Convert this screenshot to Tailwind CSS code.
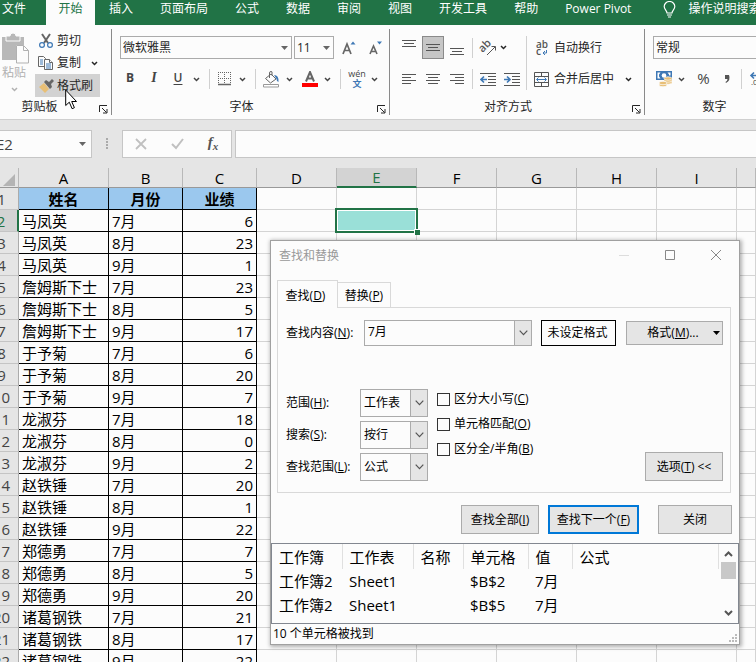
<!DOCTYPE html>
<html lang="zh-CN">
<head>
  <meta charset="UTF-8">
  <meta name="viewport" content="width=device-width, initial-scale=1.0">
  <title>工作簿2 - Excel</title>
  <script src="https://cdn.jsdelivr.net/npm/@tailwindcss/browser@4"></script>
</head>
<body class="relative flex h-screen flex-col overflow-hidden bg-[#fcfcfc] font-['Open_Sans','Noto_Sans_CJK_SC',sans-serif] text-[12px] leading-4 text-[#262626]">

  <!-- Shared icons -->
  <svg class="hidden">
    <symbol id="chev" viewBox="0 0 7 5"><path d="M1 1l2.500 2.500L6 1" fill="none" stroke="currentColor" stroke-width="1.500"/></symbol>
    <symbol id="tri" viewBox="0 0 7 4"><path d="M0 0h7L3.500 4z" fill="currentColor"/></symbol>
    <symbol id="drop" viewBox="0 0 9 6"><path d="M.7 .7l3.800 4 3.800-4" fill="none" stroke="currentColor" stroke-width="1.200"/></symbol>
    <symbol id="launch" viewBox="0 0 9 9"><path d="M.5 7V.5H8M3 3l4.500 4.500M8 4v4H4" fill="none" stroke="currentColor"/></symbol>
  </svg>

  <!-- Ribbon tabs -->
  <nav class="flex h-[25px] shrink-0 gap-[27px] overflow-hidden whitespace-nowrap bg-[#217346] pl-0.5 text-white">
    <button class="pb-[7px]">文件</button>
    <button class="-mx-[7px] w-[49px] shrink-0 bg-[#fcfcfc] pb-[7px] text-[#217346]">开始</button>
    <button class="-ml-1.5 pb-[7px]">插入</button>
    <button class="pb-[7px]">页面布局</button>
    <button class="pb-[7px]">公式</button>
    <button class="pb-[7px]">数据</button>
    <button class="pb-[7px]">审阅</button>
    <button class="pb-[7px]">视图</button>
    <button class="pb-[7px]">开发工具</button>
    <button class="pb-[7px]">帮助</button>
    <button class="pb-[7px]">Power Pivot</button>
    <button class="ml-[5px] flex shrink-0 items-start gap-3 pt-px">
      <svg class="h-[17px] w-[13px]" viewBox="0 0 13 17" fill="none" stroke="currentColor" stroke-width="1.200"><path d="M4 12C4 9.500 1.200 8.500 1.200 5.500a5.300 5 0 0 1 10.600 0C11.800 8.500 9 9.500 9 12zM4 14h5M5 16h3"/></svg>
      <span>操作说明搜索</span>
    </button>
  </nav>

  <!-- Ribbon -->
  <section class="flex h-[95px] shrink-0 overflow-hidden whitespace-nowrap border-b border-[#cfcfcf] py-1">

    <!-- Clipboard -->
    <div class="flex w-28 shrink-0 flex-col border-r border-[#8a8a8a]">
      <div class="flex h-[72px] gap-1.5">
        <button class="flex h-[70px] w-[29px] flex-col items-center pt-1 pr-px text-[#b1b1b1]">
          <svg class="h-[31px] w-[29px]" viewBox="0 0 29 31"><path d="M2 4h22v8h-8v15H2z" fill="#b8b8b8"/><path d="M6 3h4a3 3 0 0 1 6 0h4v5H6z" fill="#b8b8b8" stroke="#fcfcfc"/><path d="M16.500 12.500h7l5 5v12.500h-12zM23.500 12.500v5h5" fill="#fcfcfc" stroke="#b1b1b1"/></svg>
          <span class="mt-px">粘贴</span>
          <svg class="mt-1.5 h-[5px] w-[7px]"><use href="#chev"/></svg>
        </button>
        <div class="flex flex-col">
          <button class="flex h-[23px] items-center gap-1 pl-1">
            <svg class="h-4 w-[14px]" viewBox="0 0 14 16" fill="none"><path d="M3 1l6 9M11 1L5 10" stroke="#666" stroke-width="2"/><circle cx="3" cy="12" r="2.400" stroke="#3e78b5" stroke-width="1.200"/><circle cx="11" cy="12" r="2.400" stroke="#3e78b5" stroke-width="1.200"/></svg>
            剪切
          </button>
          <button class="flex h-[22px] items-center gap-1 pl-[3px]">
            <svg class="h-[14px] w-[15px]" viewBox="0 0 15 14" fill="#fcfcfc" stroke="#666"><path d="M.5 .5h5l2 2v8h-7z"/><path d="M2 4h3M2 6h3M2 8h3" stroke="#3e78b5"/><path d="M6.500 3.500h5l3 3v7h-8z"/><path d="M11.500 3.500v3h3" /><path d="M8 8h5M8 10h5M8 12h5" stroke="#3e78b5"/></svg>
            复制
            <svg class="ml-1.5 h-[5px] w-[7px]"><use href="#chev"/></svg>
          </button>
          <button class="flex h-[23px] w-[65px] items-center gap-[3px] bg-[#d2d2d2] pl-1">
            <svg class="h-[14px] w-[15px]" viewBox="0 0 15 14"><path d="M0 8l5-4 5 6-4 4z" fill="#e8bf76"/><path d="M5 3l2-2 3 2 3-3 2 2-3 3 1 3-2 2z" fill="#666"/></svg>
            格式刷
          </button>
        </div>
      </div>
      <div class="flex items-center">
        <span class="flex-1 pr-5 text-center">剪贴板</span>
        <button aria-label="剪贴板设置" class="mt-1 mr-[3px]"><svg class="h-[9px] w-[9px]"><use href="#launch"/></svg></button>
      </div>
    </div>

    <!-- Font -->
    <div class="flex w-[278px] shrink-0 flex-col border-r border-[#8a8a8a]">
      <div class="flex h-[72px] flex-col gap-2 pt-[7px] pl-2">
        <div class="flex h-[23px] gap-0.5">
          <label class="relative flex items-center">
            <select aria-label="字体" class="h-[23px] w-[172px] appearance-none border border-[#ababab] bg-transparent pl-0.5"><option>微软雅黑</option></select>
            <svg class="pointer-events-none absolute right-1 h-1 w-[7px] text-[#666]"><use href="#tri"/></svg>
          </label>
          <label class="relative flex items-center">
            <select aria-label="字号" class="h-[23px] w-10 appearance-none border border-[#ababab] bg-transparent pl-0.5"><option>11</option></select>
            <svg class="pointer-events-none absolute right-1 h-1 w-[7px] text-[#666]"><use href="#tri"/></svg>
          </label>
          <button aria-label="增大字号" class="ml-1.5 w-[14px]"><svg class="h-[14px] w-[14px]" viewBox="0 0 14 14" fill="none"><path d="M1 13L5 3l4 10M2.500 9.500h5" stroke="#666" stroke-width="1.700"/><path d="M8.500 3.500h5L11 .5z" fill="#3e78b5"/></svg></button>
          <button aria-label="减小字号" class="ml-[11px] w-[14px]"><svg class="h-[14px] w-[14px]" viewBox="0 0 14 14" fill="none"><path d="M1 13L4.500 5 8 13M2.500 10.500h4" stroke="#666" stroke-width="1.600"/><path d="M8 .5h5l-2.500 3z" fill="#3e78b5"/></svg></button>
        </div>
        <div class="flex h-6 items-center text-[#444]">
          <button class="-ml-0.5 w-6 pb-0.5 font-bold">B</button>
          <button class="w-6 pb-0.5 font-['Liberation_Serif'] text-[14px] font-bold italic">I</button>
          <button class="w-6 pb-0.5 font-semibold underline underline-offset-2">U</button>
          <button aria-label="下划线选项" class="flex w-3 justify-center"><svg class="h-[5px] w-[7px]"><use href="#chev"/></svg></button>
          <span class="mr-2 ml-[7px] h-5 border-l border-[#d0d0d0]"></span>
          <button aria-label="边框"><svg class="h-[14px] w-[14px]" viewBox="0 0 14 14" fill="none" stroke="#666"><path d="M0 .5h13M0 6.500h13M.5 0v12M6.500 0v12M12.500 0v12" stroke-dasharray="1 1"/><path d="M0 12.500h13" stroke-width="1.500"/></svg></button>
          <button aria-label="边框选项" class="ml-1 flex w-3 justify-center"><svg class="h-[5px] w-[7px]"><use href="#chev"/></svg></button>
          <span class="mr-[7px] ml-[7px] h-5 border-l border-[#d0d0d0]"></span>
          <button aria-label="填充颜色"><svg class="h-[17px] w-[17px]" viewBox="0 0 17 17" fill="none" stroke="#666"><path d="M2.500 7.500L8 3l5 5-5.500 4zM6.500 7V2q0-1.500 1.500-1.500T9 2v2.500"/><path d="M11 4q5 0 4.500 7-2-.5-2-3z" fill="#3e78b5" stroke="none"/><path d="M.5 13.500h15v2.500H.5z" fill="#fff" stroke="#999"/></svg></button>
          <button aria-label="填充选项" class="ml-[3px] flex w-3 justify-center"><svg class="h-[5px] w-[7px]"><use href="#chev"/></svg></button>
          <button aria-label="字体颜色" class="ml-[7px]"><svg class="h-4 w-4" viewBox="0 0 16 16" fill="none"><path d="M4 10.500L8 1l4 9.500M5.500 7.500h5" stroke="#666" stroke-width="2"/><path d="M0 12h16v4H0z" fill="#f00"/></svg></button>
          <button aria-label="字体颜色选项" class="ml-[3px] flex w-3 justify-center"><svg class="h-[5px] w-[7px]"><use href="#chev"/></svg></button>
          <span class="mr-2 ml-[7px] h-5 border-l border-[#d0d0d0]"></span>
          <button aria-label="显示拼音" class="w-4"><svg class="h-[17px] w-4 overflow-visible" viewBox="0 0 16 17"><text x="8" y="6" text-anchor="middle" font-size="9" fill="#444">wén</text><text x="8" y="16" text-anchor="middle" font-size="9" font-weight="bold" fill="#3e78b5">文</text></svg></button>
          <button aria-label="拼音选项" class="ml-[3px] flex w-3 justify-center"><svg class="h-[5px] w-[7px]"><use href="#chev"/></svg></button>
        </div>
      </div>
      <div class="flex items-center">
        <span class="flex-1 pr-1.5 text-center">字体</span>
        <button aria-label="字体设置" class="mt-1 mr-[3px]"><svg class="h-[9px] w-[9px]"><use href="#launch"/></svg></button>
      </div>
    </div>

    <!-- Alignment -->
    <div class="flex w-[255px] shrink-0 flex-col border-r border-[#8a8a8a]">
      <div class="flex h-[72px] pt-[7px] pl-[7px]">
        <div class="flex flex-col gap-2">
          <div class="flex h-[23px] items-center">
            <button aria-label="顶端对齐" class="flex w-6 justify-center"><svg class="mb-2 h-2 w-[14px]" viewBox="0 0 14 8" stroke="#555"><path d="M0 .5h14M2 3.500h10M0 6.500h14"/></svg></button>
            <button aria-label="垂直居中" class="mx-px flex h-[23px] w-[22px] items-center justify-center border border-[#8a8a8a] bg-[#c6c6c6]"><svg class="h-[7px] w-[14px]" viewBox="0 0 14 7" stroke="#555"><path d="M0 .5h14M2 3.500h10M0 6.500h14"/></svg></button>
            <button aria-label="底端对齐" class="flex w-6 justify-center"><svg class="mt-2 h-2 w-[14px]" viewBox="0 0 14 8" stroke="#555"><path d="M0 .5h14M2 3.500h10M0 6.500h14"/></svg></button>
            <span class="mx-[3px] h-5 border-l border-[#d0d0d0]"></span>
            <button aria-label="方向" class="ml-1"><svg class="h-4 w-4 overflow-visible" viewBox="0 0 16 16" fill="none" stroke="#555"><path d="M7 15l8-8M11.500 6.500h4v4"/><text x="0" y="9" transform="rotate(-45 6 8)" font-size="11" font-weight="600" fill="#555" stroke="none">ab</text></svg></button>
            <button aria-label="方向选项" class="ml-px flex w-3 justify-center"><svg class="h-[5px] w-[7px]"><use href="#chev"/></svg></button>
          </div>
          <div class="flex h-6 items-center">
            <button aria-label="左对齐" class="flex w-6 justify-center"><svg class="h-[11px] w-[14px]" viewBox="0 0 14 11" stroke="#555"><path d="M0 .5h14M0 3.500h9M0 6.500h14M0 9.500h9"/></svg></button>
            <button aria-label="居中" class="flex w-6 justify-center"><svg class="h-[11px] w-[14px]" viewBox="0 0 14 11" stroke="#555"><path d="M0 .5h14M2 3.500h10M0 6.500h14M2 9.500h10"/></svg></button>
            <button aria-label="右对齐" class="flex w-6 justify-center"><svg class="h-[11px] w-[14px]" viewBox="0 0 14 11" stroke="#555"><path d="M0 .5h14M5 3.500h9M0 6.500h14M5 9.500h9"/></svg></button>
            <span class="mx-[3px] h-5 border-l border-[#d0d0d0]"></span>
            <button aria-label="减少缩进量" class="ml-1"><svg class="h-[13px] w-4" viewBox="0 0 16 13" fill="none" stroke="#555"><path d="M0 .5h16M8 3.500h8M8 6.500h8M8 9.500h8M0 12.500h16"/><path d="M7 6.500H1M4 3.500l-3 3 3 3" stroke="#3e78b5" stroke-width="1.600"/></svg></button>
            <button aria-label="增加缩进量" class="ml-2"><svg class="h-[13px] w-4" viewBox="0 0 16 13" fill="none" stroke="#555"><path d="M0 .5h16M8 3.500h8M8 6.500h8M8 9.500h8M0 12.500h16"/><path d="M0 6.500h6M3 3.500l3 3-3 3" stroke="#3e78b5" stroke-width="1.600"/></svg></button>
          </div>
        </div>
        <span class="ml-1.5 h-[54px] border-l border-[#d0d0d0]"></span>
        <div class="ml-[7px] flex flex-col gap-2">
          <button class="flex h-[23px] items-center gap-[5px]">
            <svg class="h-4 w-[15px] overflow-visible" viewBox="0 0 15 16" fill="none"><text x="2" y="8" font-size="10" font-weight="600" fill="#555">ab</text><text x="2" y="15" font-size="10" font-weight="600" fill="#555">c</text><path d="M12.500 10v3H9M11 11l-2 2 2 2" stroke="#3e78b5"/></svg>
            自动换行
          </button>
          <button class="flex h-6 items-center gap-[5px]">
            <svg class="h-[15px] w-[15px]" viewBox="0 0 15 15" fill="none" stroke="#555"><path d="M.5 .5h14v14H.5zM.5 4.500h14M.5 10.500h14M7.500 .5v4M7.500 10.500v4"/><path d="M3 7.500h9M4.500 5.500l-2 2 2 2M10.500 5.500l2 2-2 2" stroke="#3e78b5"/></svg>
            合并后居中
            <svg class="ml-1.5 h-[5px] w-[7px]"><use href="#chev"/></svg>
          </button>
        </div>
      </div>
      <div class="flex items-center">
        <span class="flex-1 pr-1.5 text-center">对齐方式</span>
        <button aria-label="对齐设置" class="mt-1 mr-[3px]"><svg class="h-[9px] w-[9px]"><use href="#launch"/></svg></button>
      </div>
    </div>

    <!-- Number -->
    <div class="flex min-w-0 flex-1 flex-col">
      <div class="flex h-[72px] flex-col gap-2 pt-[7px] pl-2">
        <select aria-label="数字格式" class="h-[23px] w-[130px] shrink-0 appearance-none border border-[#ababab] bg-transparent pl-0.5"><option>常规</option></select>
        <div class="flex h-6 items-center text-[#444]">
          <button aria-label="会计数字格式" class="ml-[3px] shrink-0"><svg class="h-4 w-4" viewBox="0 0 16 16"><path d="M0 0h16v9H0z" fill="#3e78b5"/><path d="M1.500 1.500h3l-1.500 2v2l1.500 2h-3zM14.500 1.500h-3l1.500 2v1h1.500z" fill="#fff"/><circle cx="8" cy="4.500" r="2.300" fill="#fff"/><g fill="#e8bf76" stroke="#fcfcfc" stroke-width=".7"><ellipse cx="12" cy="11.500" rx="4" ry="1.700"/><ellipse cx="12" cy="9.500" rx="4" ry="1.700"/><ellipse cx="12" cy="7.500" rx="4" ry="1.700"/><ellipse cx="7" cy="14" rx="4" ry="1.700"/><ellipse cx="7" cy="12" rx="4" ry="1.700"/></g></svg></button>
          <button aria-label="会计格式选项" class="ml-[3px] flex w-3 shrink-0 justify-center"><svg class="h-[5px] w-[7px]"><use href="#chev"/></svg></button>
          <button class="ml-2.5 w-[13px] shrink-0 pb-0.5 text-[15px]">%</button>
          <button aria-label="千位分隔样式" class="ml-3.5 shrink-0"><svg class="h-2 w-[7px]" viewBox="0 0 7 8"><path d="M1 0h4q2 5-3 8l-.5-1Q3.500 6 3.500 4H1z" fill="#555"/></svg></button>
          <span class="mr-2 ml-2.5 h-5 border-l border-[#d0d0d0]"></span>
          <button aria-label="增加小数位数" class="shrink-0"><svg class="h-[14px] w-[14px] overflow-visible" viewBox="0 0 14 14" fill="none"><path d="M7 3.500H1M4 .5l-3 3 3 3" stroke="#3e78b5" stroke-width="1.600"/><text x="1" y="13" font-size="8" fill="#444">.00</text></svg></button>
        </div>
      </div>
      <span class="pl-7 text-center">数字</span>
    </div>
  </section>

  <!-- Formula bar -->
  <section class="-ml-[15px] flex h-12 shrink-0 items-center bg-[#e5e5e5]">
    <label class="relative flex items-center">
      <input aria-label="名称框" value="E2" class="h-7 w-[107px] border border-[#c6c6c6] bg-[#fcfcfc] pl-2.5 text-[15px] text-[#444]">
      <svg class="pointer-events-none absolute right-1.5 h-1 w-[7px] text-[#666]"><use href="#tri"/></svg>
    </label>
    <svg class="mx-[14px] h-3 w-0.5 shrink-0" viewBox="0 0 2 12" fill="#aaa"><path d="M0 0h2v2H0zM0 3h2v2H0zM0 6h2v2H0zM0 9h2v2H0z"/></svg>
    <div class="flex h-7 w-[110px] shrink-0 items-center border border-[#c6c6c6] bg-[#fcfcfc]">
      <button aria-label="取消" class="flex w-9 justify-center"><svg class="h-3 w-3" viewBox="0 0 12 12"><path d="M1 1l10 10M11 1L1 11" stroke="#c0c0c0" stroke-width="1.800"/></svg></button>
      <button aria-label="输入" class="flex w-9 justify-center"><svg class="h-3 w-[13px]" viewBox="0 0 13 12"><path d="M1 6l4 4 7-9" fill="none" stroke="#c0c0c0" stroke-width="2"/></svg></button>
      <button class="w-9 pb-1 font-['Liberation_Serif'] text-[15px] font-bold italic text-[#555]">f<sub class="text-[11px]">x</sub></button>
    </div>
    <input aria-label="编辑栏" class="ml-[3px] h-7 min-w-0 flex-1 border border-r-0 border-[#c6c6c6] bg-[#fcfcfc] px-2 text-[15px]">
  </section>

  <!-- Sheet -->
  <main class="-ml-[15px] min-h-0 flex-1 overflow-hidden">
    <table class="w-full table-fixed border-separate border-spacing-0 text-[15px] leading-[18px] text-black">
      <colgroup>
        <col class="w-[34px]"><col class="w-[90px]"><col class="w-[74px]"><col class="w-[74px]">
        <col class="w-20"><col class="w-20"><col class="w-20"><col class="w-20"><col class="w-20"><col class="w-20"><col>
      </colgroup>
      <thead>
        <tr id="heads" class="h-5 bg-[#e5e5e5]"></tr>
      </thead>
      <tbody id="rows"></tbody>
    </table>
  </main>

  <!-- Mouse pointer -->
  <svg class="pointer-events-none absolute top-[89px] left-[65px] h-[21px] w-[13px]" viewBox="0 0 13 21"><path d="M.7 1v15.500l3.600-3.300 2.800 6.500 2.300-1-2.700-6.200h4.800z" fill="#fff" stroke="#000"/></svg>

  <!-- Find and replace -->
  <div role="dialog" aria-labelledby="dlgTitle" class="absolute top-60 left-[270px] flex w-[470px] flex-col border border-[#a0a0a0] bg-[#fcfcfc] text-black shadow-[1px_1px_4px_1px_rgba(0,0,0,0.3)]">
    <div class="flex h-[39px] items-start pt-[7px] pr-[17px] pl-2">
      <h2 id="dlgTitle" class="flex-1 text-[#999]">查找和替换</h2>
      <div class="flex gap-[34px] pt-px">
        <button aria-label="最小化" disabled><svg class="h-3 w-3" viewBox="0 0 12 12"><path d="M1 6.500h10" stroke="#ddd"/></svg></button>
        <button aria-label="最大化"><svg class="h-3 w-3" viewBox="0 0 12 12"><path d="M1.500 1.500h9v9h-9z" fill="none" stroke="#888"/></svg></button>
        <button aria-label="关闭窗口"><svg class="h-3 w-3" viewBox="0 0 12 12"><path d="M1 1l10 10M11 1L1 11" stroke="#888"/></svg></button>
      </div>
    </div>

    <div role="tablist" class="z-10 flex h-7 items-end pl-1.5">
      <button role="tab" aria-selected="true" class="h-7 w-[61px] border border-b-0 border-[#d9d9d9] bg-[#fcfcfc] pt-0.5 pr-1">查找(<u>D</u>)</button>
      <button role="tab" class="h-[26px] w-[53px] border border-l-0 border-[#d9d9d9] pt-0.5">替换(<u>P</u>)</button>
    </div>

    <div class="mx-1.5 -mt-px mr-2 flex h-[186px] flex-col justify-between border border-[#d9d9d9] pt-3 pr-[7px] pb-[11px] pl-2">
      <div class="flex items-center">
        <label for="what" class="w-[78px] shrink-0">查找内容(<u>N</u>):</label>
        <div class="relative flex h-[26px] w-[168px] shrink-0">
          <input id="what" value="7月" class="w-full border border-[#ababab] pb-0.5 pl-[3px]">
          <button aria-label="历史记录" class="absolute inset-y-0 right-0 flex w-[18px] items-center justify-center border border-[#ababab] bg-[#e5e5e5] text-[#555]"><svg class="h-1.5 w-[9px]"><use href="#drop"/></svg></button>
        </div>
        <output class="ml-[9px] h-[26px] w-[75px] shrink-0 border border-black pt-1 pr-0.5 text-center">未设定格式</output>
        <button class="ml-2.5 flex h-6 flex-1 items-center border border-[#ababab] bg-[#e5e5e5]"><span class="flex-1 pl-1.5">格式(<u>M</u>)...</span><svg class="mr-0.5 h-1 w-[7px]"><use href="#tri"/></svg></button>
      </div>

      <div class="flex items-end">
        <div class="flex flex-col gap-1">
          <div class="flex items-center">
            <label for="within" class="w-[74px]">范围(<u>H</u>):</label>
            <div class="relative">
              <select id="within" class="block h-7 w-[68px] appearance-none border border-[#ababab] pl-[3px]"><option>工作表</option><option>工作簿</option></select>
              <span class="pointer-events-none absolute inset-y-0 right-0 flex w-[18px] items-center justify-center border border-[#ababab] bg-[#e5e5e5] text-[#555]"><svg class="h-1.5 w-[9px]"><use href="#drop"/></svg></span>
            </div>
          </div>
          <div class="flex items-center">
            <label for="order" class="w-[74px]">搜索(<u>S</u>):</label>
            <div class="relative">
              <select id="order" class="block h-7 w-[68px] appearance-none border border-[#ababab] pl-[3px]"><option>按行</option><option>按列</option></select>
              <span class="pointer-events-none absolute inset-y-0 right-0 flex w-[18px] items-center justify-center border border-[#ababab] bg-[#e5e5e5] text-[#555]"><svg class="h-1.5 w-[9px]"><use href="#drop"/></svg></span>
            </div>
          </div>
          <div class="flex items-center">
            <label for="lookin" class="w-[74px]">查找范围(<u>L</u>):</label>
            <div class="relative">
              <select id="lookin" class="block h-7 w-[68px] appearance-none border border-[#ababab] pl-[3px]"><option>公式</option><option>值</option></select>
              <span class="pointer-events-none absolute inset-y-0 right-0 flex w-[18px] items-center justify-center border border-[#ababab] bg-[#e5e5e5] text-[#555]"><svg class="h-1.5 w-[9px]"><use href="#drop"/></svg></span>
            </div>
          </div>
        </div>
        <div class="ml-[9px] flex flex-1 flex-col gap-[9px] self-start pt-0.5">
          <label class="flex items-center gap-1"><input type="checkbox" class="size-[13px] appearance-none border border-[#333]"><span>区分大小写(<u>C</u>)</span></label>
          <label class="flex items-center gap-1"><input type="checkbox" class="size-[13px] appearance-none border border-[#333]"><span>单元格匹配(<u>O</u>)</span></label>
          <label class="flex items-center gap-1"><input type="checkbox" class="size-[13px] appearance-none border border-[#333]"><span>区分全/半角(<u>B</u>)</span></label>
        </div>
        <button class="h-[29px] w-[78px] border border-[#ababab] bg-[#e5e5e5]">选项(<u>T</u>) &lt;&lt;</button>
      </div>
    </div>

    <div class="mt-3 mr-[7px] flex justify-end">
      <button class="h-[29px] w-[78px] border border-[#ababab] bg-[#e5e5e5]">查找全部(<u>I</u>)</button>
      <button class="ml-[9px] h-[29px] w-[91px] border-2 border-[#0078d7] bg-[#e5e5e5]">查找下一个(<u>F</u>)</button>
      <button class="ml-[19px] h-[29px] w-[74px] border border-[#ababab] bg-[#e5e5e5]">关闭</button>
    </div>

    <!-- Results -->
    <div class="mt-[9px] flex h-[81px] border border-[#828790]">
      <div class="min-w-0 flex-1">
        <table class="w-full table-fixed text-left text-[15px]">
          <colgroup><col class="w-[70px]"><col class="w-[71px]"><col class="w-[50px]"><col class="w-[65px]"><col class="w-11"><col></colgroup>
          <thead>
            <tr class="h-[25px] *:border-r *:border-[#e0e0e0] *:pl-[7px] *:font-normal"><th>工作簿</th><th>工作表</th><th>名称</th><th>单元格</th><th>值</th><th>公式</th></tr>
          </thead>
          <tbody>
            <tr class="h-6 *:pl-[7px]"><td>工作簿2</td><td>Sheet1</td><td></td><td>$B$2</td><td>7月</td><td></td></tr>
            <tr class="h-6 *:pl-[7px]"><td>工作簿2</td><td>Sheet1</td><td></td><td>$B$5</td><td>7月</td><td></td></tr>
          </tbody>
        </table>
      </div>
      <div class="flex w-[19px] flex-col items-center py-[7px] pr-px text-[#555]">
        <svg class="h-1.5 w-[9px]" viewBox="0 0 9 6"><path d="M1 5l3.500-3.500L8 5" fill="none" stroke="currentColor" stroke-width="2"/></svg>
        <span class="mt-[5px] h-[17px] w-[15px] bg-[#c8c8c8]"></span>
        <svg class="mt-auto h-1.5 w-[9px]" viewBox="0 0 9 6"><path d="M1 1l3.500 3.500L8 1" fill="none" stroke="currentColor" stroke-width="2"/></svg>
      </div>
    </div>
    <div class="flex h-5 items-center justify-between pl-0.5">
      <span>10 个单元格被找到</span>
      <svg class="mt-2 mr-0.5 h-2 w-2" viewBox="0 0 8 8" fill="#bbb"><path d="M6 0h2v2H6zM3 3h2v2H3zM6 3h2v2H6zM0 6h2v2H0zM3 6h2v2H3zM6 6h2v2H6z"/></svg>
    </div>
  </div>

  <script>
    const people = ["马凤英", "詹姆斯下士", "于予菊", "龙淑芬", "赵铁锤", "郑德勇", "诸葛钢铁"];
    const scores = [6, 23, 1, 23, 5, 17, 6, 20, 7, 18, 0, 2, 20, 1, 22, 7, 5, 20, 21, 17, 22];
    const data = scores.map((score, i) => [people[Math.floor(i / 3)], `${7 + i % 3}月`, score]);

    const headCell = "border-r border-b border-r-[#b8b8b8] border-b-[#999] p-0 font-normal";
    const activeHead = "border-r border-b-2 border-r-[#b8b8b8] border-b-[#217346] bg-[#d3d3d3] p-0 font-normal text-[#217346]";
    const rowHead = "border-r border-b border-r-[#ababab] border-b-[#c4c4c4] bg-[#e5e5e5] p-0 text-center font-normal text-[#444]";
    const activeRow = "border-r-2 border-b border-r-[#217346] border-b-[#c4c4c4] bg-[#d3d3d3] p-0 text-center font-normal text-[#217346]";
    const titleCell = "border-r border-b border-black bg-[#9bc8ee] p-0 text-center font-bold";
    const textCell = "border-r border-b border-black p-0 pl-[3px]";
    const numCell = "border-r border-b border-black p-0 pr-[3px] text-right";
    const blank = `<td class="border-r border-b border-[#d4d4d4] p-0"></td>`;
    const selected = `
      <td class="relative border-r border-b border-[#d4d4d4] p-0">
        <div class="absolute -inset-0.5 border-2 border-[#217346] bg-white p-px"><div class="h-full bg-[#9ae0d8]"></div></div>
        <div class="absolute -right-1 -bottom-1 size-1.5 border-t border-l border-white bg-[#217346]"></div>
      </td>`;

    const corner = `<th class="border-r border-b border-r-[#b8b8b8] border-b-[#999] p-0"><svg class="mt-1 mr-[3px] ml-auto h-3 w-3" viewBox="0 0 12 12"><path d="M12 0v12H0z" fill="#b4b4b4"/></svg></th>`;
    document.getElementById("heads").innerHTML = corner +
      [..."ABCDEFGHI"].map(c => `<th class="${c === "E" ? activeHead : headCell}">${c}</th>`).join("") +
      `<th class="${headCell}"></th>`;

    const titles = ["姓名", "月份", "业绩"].map(t => `<td class="${titleCell}">${t}</td>`).join("");
    let html = `<tr class="h-[22px]"><th class="${rowHead}">1</th>${titles}${blank.repeat(7)}</tr>`;
    data.forEach(([name, month, score], i) => {
      const rest = i === 0 ? blank + selected + blank.repeat(5) : blank.repeat(7);
      html += `<tr class="h-[22px]"><th class="${i === 0 ? activeRow : rowHead}">${i + 2}</th><td class="${textCell}">${name}</td><td class="${textCell}">${month}</td><td class="${numCell}">${score}</td>${rest}</tr>`;
    });
    document.getElementById("rows").innerHTML = html;
  </script>

</body>
</html>
